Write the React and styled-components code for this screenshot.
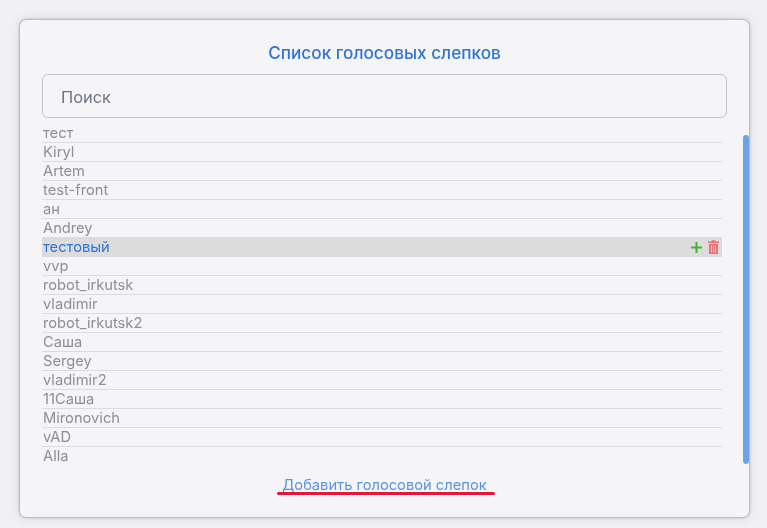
import React from "react"
import styled, { createGlobalStyle } from "styled-components"

const names = [
  "тест", "Kiryl", "Artem", "test-front", "ан", "Andrey", "тестовый", "vvp",
  "robot_irkutsk", "vladimir", "robot_irkutsk2", "Саша", "Sergey", "vladimir2",
  "11Саша", "Mironovich", "vAD", "Alla",
]
const ACTIVE = "тестовый"

const Global = createGlobalStyle`
  html, body {
    margin: 0;
    height: 100%;
    background: #f1f1f3;
    font-family: Inter, "Noto Sans", sans-serif;
  }
  * { box-sizing: border-box; }
`

const Page = styled.div`
  padding: 20px 18px 11px 20px;
  height: 528px;
  overflow: hidden;
  filter: blur(0.5px);
`

const Card = styled.section`
  position: relative;
  height: 497px;
  background: #f5f5f8;
  border-radius: 6px;
  box-shadow: 0 0 3px rgba(0, 0, 0, 0.5), 0 0 14px rgba(0, 0, 0, 0.1);
  padding: 24px 27px 0 22px;
  display: flex;
  flex-direction: column;
`

const Title = styled.h2`
  margin: 0 0 11px;
  font-size: 17.2px;
  line-height: 18px;
  font-weight: 500;
  text-align: center;
  color: #2f74d6;
  padding-left: 5px;
`

const Search = styled.input`
  width: 685px;
  height: 44px;
  flex: none;
  margin-top: 1px;
  margin-bottom: 5.5px;
  padding: 2px 18px 0;
  background: transparent;
  border: 1px solid #c4c4c6;
  border-radius: 6px;
  font: 400 16.4px Inter, sans-serif;
  color: #6c757d;
  outline: none;

  &::placeholder {
    color: #6c757d;
    opacity: 1;
  }
`

const List = styled.ul`
  list-style: none;
  margin: 0;
  padding: 0;
  width: 680px;
`

const Row = styled.li`
  display: flex;
  align-items: center;
  justify-content: space-between;
  height: 19px;
  padding: 1px 0 0 1px;
  font-size: 14.7px;
  line-height: 17px;
  color: ${p => (p.$active ? "#2f74d6" : "#8f8f91")};
  background: ${p => (p.$active ? "#dcdcdc" : "transparent")};
  border-bottom: 1.5px solid #dcdcde;

  &:last-child {
    border-bottom: 0;
  }
`

const Actions = styled.span`
  display: flex;
  align-items: center;
  gap: 6px;
  padding-right: 3px;
`

const Scrollbar = styled.div`
  position: absolute;
  right: 0;
  top: 115px;
  width: 6px;
  height: 329px;
  border-radius: 3px;
  background: #69a5e4;
`

const Footer = styled.div`
  flex: 1;
  display: flex;
  justify-content: center;
  padding-top: 11px;
  padding-left: 5px;
`

const AddLink = styled.a`
  position: relative;
  height: 17px;
  font-size: 14.7px;
  line-height: 17px;
  color: #5b94e0;
  text-decoration: underline;
  text-underline-offset: 2px;
  cursor: pointer;

  &::after {
    content: "";
    position: absolute;
    left: -5px;
    right: -8px;
    top: 15px;
    height: 3px;
    border-radius: 2px;
    background: #e3173a;
  }
`

const PlusIcon = () => (
  <svg width="11" height="11" viewBox="0 0 11 11" aria-hidden="true">
    <path d="M5.5 0v11M0 5.5h11" stroke="#4caf3a" strokeWidth="2" />
  </svg>
)

const TrashIcon = () => (
  <svg width="11" height="14" viewBox="0 0 11 14" aria-hidden="true">
    <path d="M0 1.5h11v1.5H0zM3.5.3h4v1.2h-4z" fill="#e57373" />
    <path d="M1 4h9v10H1z" fill="#e57373" />
    <path d="M3.4 5.5v7M5.5 5.5v7M7.6 5.5v7" stroke="#f3c0c0" strokeWidth="1" />
  </svg>
)

export default function App() {
  return (
    <Page>
      <Global />
      <Card>
        <Title>Список голосовых слепков</Title>
        <Search placeholder="Поиск" />
        <List>
          {names.map(name => (
            <Row key={name} $active={name === ACTIVE}>
              {name}
              {name === ACTIVE && (
                <Actions>
                  <PlusIcon />
                  <TrashIcon />
                </Actions>
              )}
            </Row>
          ))}
        </List>
        <Scrollbar />
        <Footer>
          <AddLink>Добавить голосовой слепок</AddLink>
        </Footer>
      </Card>
    </Page>
  )
}
